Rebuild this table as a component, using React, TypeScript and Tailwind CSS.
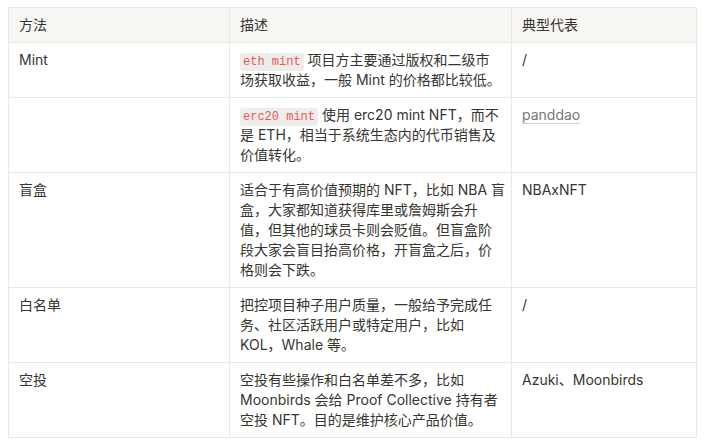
import React from "react";

const Code = ({ children }: { children: React.ReactNode }) => (
  <code
    className="rounded-[3px] bg-[rgba(135,131,120,0.15)] px-[3px] py-[2px] text-[12px] leading-none text-[#eb5757]"
    style={{ fontFamily: '"Liberation Mono", "DejaVu Sans Mono", monospace' }}
  >
    {children}
  </code>
);

const td = "border border-[#e9e9e7] px-[10px] py-[7px] align-top whitespace-nowrap";

export default function App() {
  return (
    <div
      className="bg-white pl-[8px] pt-[7px] text-[14px] leading-[20px] text-[#37352f]"
      style={{ fontFamily: 'Inter, "Noto Sans CJK SC", sans-serif' }}
    >
      <table className="table-fixed border-collapse" style={{ width: 688 }}>
        <colgroup>
          <col style={{ width: 221 }} />
          <col style={{ width: 282 }} />
          <col style={{ width: 185 }} />
        </colgroup>
        <thead>
          <tr className="bg-[#f7f6f3]">
            <th className={`${td} text-left font-normal`}>方法</th>
            <th className={`${td} text-left font-normal`}>描述</th>
            <th className={`${td} text-left font-normal`}>典型代表</th>
          </tr>
        </thead>
        <tbody>
          <tr>
            <td className={td}>Mint</td>
            <td className={td}>
              <Code>eth mint</Code> 项目方主要通过版权和二级市
              <br />
              场获取收益，一般 Mint 的价格都比较低。
            </td>
            <td className={td}>/</td>
          </tr>
          <tr>
            <td className={td}></td>
            <td className={td}>
              <Code>erc20 mint</Code> 使用 erc20 mint NFT，而不
              <br />
              是 ETH，相当于系统生态内的代币销售及
              <br />
              价值转化。
            </td>
            <td className={td}>
              <span className="text-[#787774] underline decoration-[#d3d2cf] underline-offset-[3px]">
                panddao
              </span>
            </td>
          </tr>
          <tr>
            <td className={td}>盲盒</td>
            <td className={td}>
              适合于有高价值预期的 NFT，比如 NBA 盲
              <br />
              盒，大家都知道获得库里或詹姆斯会升
              <br />
              值，但其他的球员卡则会贬值。但盲盒阶
              <br />
              段大家会盲目抬高价格，开盲盒之后，价
              <br />
              格则会下跌。
            </td>
            <td className={td}>NBAxNFT</td>
          </tr>
          <tr>
            <td className={td}>白名单</td>
            <td className={td}>
              把控项目种子用户质量，一般给予完成任
              <br />
              务、社区活跃用户或特定用户，比如
              <br />
              KOL，Whale 等。
            </td>
            <td className={td}>/</td>
          </tr>
          <tr>
            <td className={td}>空投</td>
            <td className={td}>
              空投有些操作和白名单差不多，比如
              <br />
              Moonbirds 会给 Proof Collective 持有者
              <br />
              空投 NFT。目的是维护核心产品价值。
            </td>
            <td className={td}>Azuki、Moonbirds</td>
          </tr>
        </tbody>
      </table>
    </div>
  );
}
